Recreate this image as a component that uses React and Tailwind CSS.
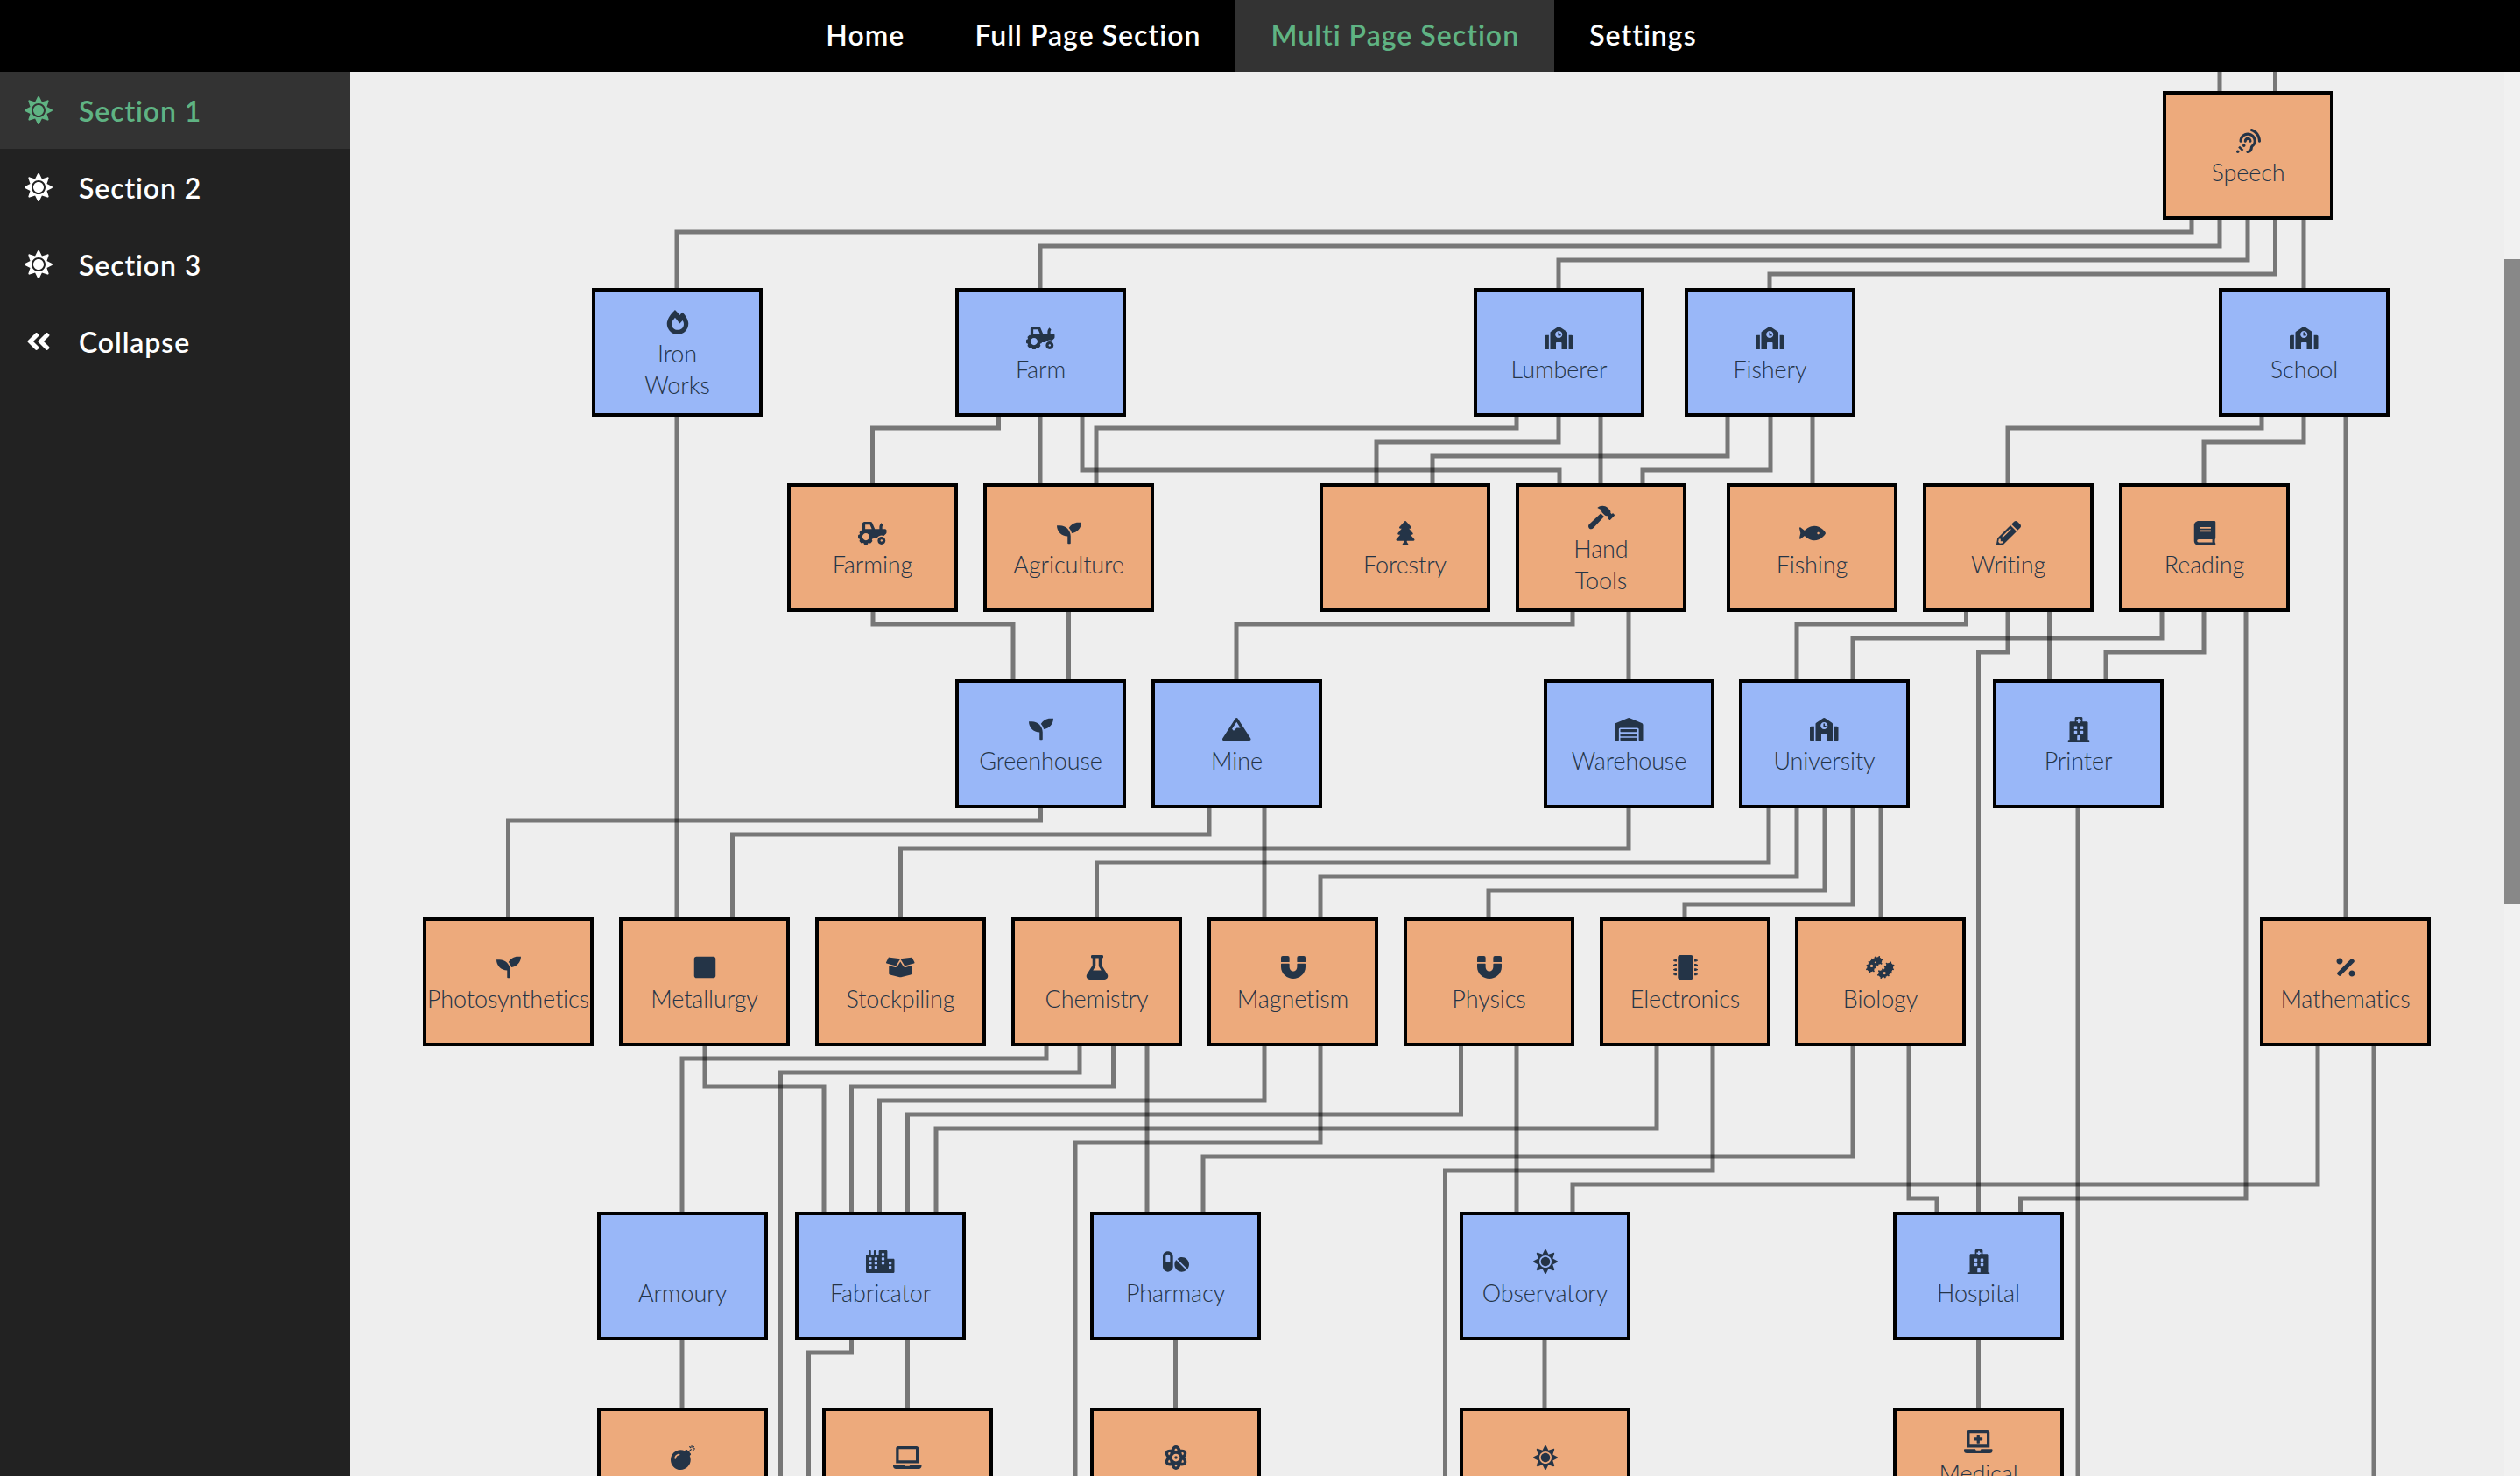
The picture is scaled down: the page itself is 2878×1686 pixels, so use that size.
import React from "react";
import {
  FaSun, FaAngleDoubleLeft, FaFireAlt, FaTractor, FaSchool, FaSeedling, FaTree, FaHammer, FaFish,
  FaPencilAlt, FaBook, FaMountain, FaWarehouse, FaHospital, FaSquare, FaBoxOpen, FaFlask, FaMagnet,
  FaMicrochip, FaBacteria, FaPercentage, FaCity, FaPills, FaBomb, FaLaptop, FaAtom, FaLaptopMedical,
  FaAssistiveListeningSystems,
} from "react-icons/fa";

const OX = 400;
const OY = 82;
const NBSP = "\u00a0";

const ROWS = { r0: 104, r1: 329, r2: 552, r3: 776, r4: 1048, r5: 1384, r6: 1608 };

// react-icons draws on a square box, so wide glyphs need their own width
const WIDE = "w-[32.5px]";
const MID = "w-[30px]";

const NODES = [
  { t: "Speech", x: 2470, y: ROWS.r0, c: "o", I: FaAssistiveListeningSystems },
  { t: "Iron Works", x: 676, y: ROWS.r1, c: "b", I: FaFireAlt },
  { t: "Farm", x: 1091, y: ROWS.r1, c: "b", I: FaTractor, w: WIDE },
  { t: "Lumberer", x: 1683, y: ROWS.r1, c: "b", I: FaSchool, w: WIDE },
  { t: "Fishery", x: 1924, y: ROWS.r1, c: "b", I: FaSchool, w: WIDE },
  { t: "School", x: 2534, y: ROWS.r1, c: "b", I: FaSchool, w: WIDE },
  { t: "Farming", x: 899, y: ROWS.r2, c: "o", I: FaTractor, w: WIDE },
  { t: "Agriculture", x: 1123, y: ROWS.r2, c: "o", I: FaSeedling },
  { t: "Forestry", x: 1507, y: ROWS.r2, c: "o", I: FaTree },
  { t: "Hand Tools", x: 1731, y: ROWS.r2, c: "o", I: FaHammer, w: MID },
  { t: "Fishing", x: 1972, y: ROWS.r2, c: "o", I: FaFish, w: MID },
  { t: "Writing", x: 2196, y: ROWS.r2, c: "o", I: FaPencilAlt },
  { t: "Reading", x: 2420, y: ROWS.r2, c: "o", I: FaBook },
  { t: "Greenhouse", x: 1091, y: ROWS.r3, c: "b", I: FaSeedling },
  { t: "Mine", x: 1315, y: ROWS.r3, c: "b", I: FaMountain, w: WIDE },
  { t: "Warehouse", x: 1763, y: ROWS.r3, c: "b", I: FaWarehouse, w: WIDE },
  { t: "University", x: 1986, y: ROWS.r3, c: "b", I: FaSchool, w: WIDE },
  { t: "Printer", x: 2276, y: ROWS.r3, c: "b", I: FaHospital },
  { t: "Photosynthetics", x: 483, y: ROWS.r4, c: "o", I: FaSeedling },
  { t: "Metallurgy", x: 707, y: ROWS.r4, c: "o", I: FaSquare },
  { t: "Stockpiling", x: 931, y: ROWS.r4, c: "o", I: FaBoxOpen, w: WIDE },
  { t: "Chemistry", x: 1155, y: ROWS.r4, c: "o", I: FaFlask },
  { t: "Magnetism", x: 1379, y: ROWS.r4, c: "o", I: FaMagnet },
  { t: "Physics", x: 1603, y: ROWS.r4, c: "o", I: FaMagnet },
  { t: "Electronics", x: 1827, y: ROWS.r4, c: "o", I: FaMicrochip },
  { t: "Biology", x: 2050, y: ROWS.r4, c: "o", I: FaBacteria, w: WIDE },
  { t: "Mathematics", x: 2581, y: ROWS.r4, c: "o", I: FaPercentage },
  { t: "Armoury", x: 682, y: ROWS.r5, c: "b" },
  { t: "Fabricator", x: 908, y: ROWS.r5, c: "b", I: FaCity, w: WIDE },
  { t: "Pharmacy", x: 1245, y: ROWS.r5, c: "b", I: FaPills, w: MID },
  { t: "Observatory", x: 1667, y: ROWS.r5, c: "b", I: FaSun },
  { t: "Hospital", x: 2162, y: ROWS.r5, c: "b", I: FaHospital },
  { t: NBSP, x: 682, y: ROWS.r6, c: "o", I: FaBomb },
  { t: NBSP, x: 939, y: ROWS.r6, c: "o", I: FaLaptop, w: WIDE },
  { t: NBSP, x: 1245, y: ROWS.r6, c: "o", I: FaAtom },
  { t: NBSP, x: 1667, y: ROWS.r6, c: "o", I: FaSun },
  { t: "Medical Technology", x: 2162, y: ROWS.r6, c: "o", I: FaLaptopMedical, w: WIDE },
];

const W = (x1, y1, lvl, x2, y2) => `M${x1} ${y1}V${lvl}H${x2}V${y2}`;
const S = (x, y1, y2) => `M${x} ${y1}V${y2}`;
const B0 = 251, B1 = 475, B2 = 699, B3 = 923, B4 = 1195, B5 = 1531;
const { r1, r2, r3, r4, r5, r6 } = ROWS;
const END = 1700;

const WIRES = [
  S(2535, 82, 104), S(2598.5, 82, 104),
  W(2503, B0, 265, 773, r1), W(2535, B0, 281, 1188, r1), W(2567, B0, 297, 1780, r1),
  W(2598.5, B0, 313, 2021, r1), S(2631, B0, r1),
  S(773, B1, r4),
  W(1140.5, B1, 489, 996.5, r2), S(1188, B1, r2), W(1236, B1, 537, 1781, r2),
  W(1732, B1, 489, 1252, r2), W(1780, B1, 505, 1572, r2), S(1828, B1, r2),
  W(1973, B1, 521, 1636, r2), W(2022, B1, 537, 1876, r2), S(2070, B1, r2),
  W(2583, B1, 489, 2293, r2), W(2631, B1, 505, 2517, r2), S(2679, B1, r4),
  W(997, B2, 713, 1157, r3), S(1220.5, B2, r3), W(1796, B2, 713, 1412, r3), S(1860, B2, r3),
  W(2245.5, B2, 713, 2052, r3), W(2293, B2, 745, 2259.5, r5), S(2340.5, B2, r3),
  W(2469, B2, 729, 2116, r3), W(2517, B2, 745, 2405, r3), W(2565, B2, 1369, 2307.5, r5),
  W(1188.5, B3, 937, 580.5, r4), W(1381, B3, 953, 836.5, r4), S(1444, B3, r4),
  W(1860, B3, 969, 1028.5, r4), W(2020, B3, 985, 1252.5, r4), W(2052, B3, 1001, 1508, r4),
  W(2084, B3, 1017, 1700, r4), W(2116, B3, 1033, 1924, r4), S(2148, B3, r4), S(2373, B3, END),
  W(1195, B4, 1209, 779, r5), W(1233, B4, 1225, 891.5, END), W(1271.5, B4, 1241, 972.5, r5), S(1310, B4, r5),
  W(805, B4, 1241, 941, r5), W(1444, B4, 1257, 1004.5, r5), W(1508, B4, 1305, 1228, END),
  W(1668.5, B4, 1273, 1036.5, r5), S(1732, B4, r5), W(1892, B4, 1289, 1069, r5), W(1956, B4, 1337, 1650.5, END),
  W(2116, B4, 1321, 1374, r5), W(2180, B4, 1369, 2212, r5), W(2647, B4, 1353, 1796, r5), S(2711, B4, END),
  S(779, B5, r6), W(972.5, B5, 1545, 923.5, END), S(1036.5, B5, r6), S(1342.5, B5, r6), S(1764, B5, r6), S(2259.5, B5, r6),
];

const FONT = "font-['Lato','Liberation_Sans',sans-serif]";

function NavItem({ label, active }) {
  return (
    <a className={`flex h-full items-center px-10 pb-[3px] text-[32px] font-semibold tracking-[1.03px] ${active ? "bg-[#333333] text-[#5fb383]" : "text-white"}`}>
      {label}
    </a>
  );
}

function SideItem({ label, Icon, active }) {
  return (
    <a className={`flex h-[88px] items-center gap-[30px] pl-7 text-[32px] font-semibold tracking-[0.9px] ${active ? "bg-[#333333] text-[#5fb383]" : "text-white"}`}>
      <Icon size={32} className="shrink-0" />
      <span className="pt-px">{label}</span>
    </a>
  );
}

function Node({ n }) {
  const Icon = n.I;
  return (
    <div
      className={`absolute flex h-[147px] w-[195px] flex-col items-center justify-center border-4 border-black pt-[2px] text-center text-[27px] leading-[36px] font-light tracking-[-0.1px] text-[#243447] ${n.c === "o" ? "bg-[#edaa7c]" : "bg-[#99b7f8]"}`}
      style={{ left: n.x - OX, top: n.y - OY }}
    >
      <div className="flex h-9 items-center justify-center">
        {Icon ? <Icon size={28} className={`h-7 ${n.w || "w-7"}`} /> : null}
      </div>
      <div className="w-min">{n.t}</div>
    </div>
  );
}

export default function App() {
  return (
    <div className={`flex h-[1686px] w-[2878px] flex-col overflow-hidden bg-[#eeeeee] ${FONT}`}>
      <header className="flex h-[82px] shrink-0 items-center justify-center bg-black pl-[3px]">
        <NavItem label="Home" />
        <NavItem label="Full Page Section" />
        <NavItem label="Multi Page Section" active />
        <NavItem label="Settings" />
      </header>
      <div className="flex min-h-0 flex-1">
        <aside className="w-[400px] shrink-0 bg-[#222222]">
          <SideItem label="Section 1" Icon={FaSun} active />
          <SideItem label="Section 2" Icon={FaSun} />
          <SideItem label="Section 3" Icon={FaSun} />
          <SideItem label="Collapse" Icon={FaAngleDoubleLeft} />
        </aside>
        <main className="relative min-w-0 flex-1 overflow-hidden">
          <svg className="absolute inset-0 h-full w-full" viewBox={`${OX} ${OY} 2460 1604`} fill="none">
            {WIRES.map((d, i) => (
              <path key={i} d={d} stroke="#000" strokeOpacity="0.5" strokeWidth="5" />
            ))}
          </svg>
          {NODES.map((n, i) => (
            <Node key={i} n={n} />
          ))}
        </main>
        <div className="w-[18px] shrink-0 bg-[#f1f1f1] pt-[214px]">
          <div className="h-[737px] bg-[#888888]" />
        </div>
      </div>
    </div>
  );
}
